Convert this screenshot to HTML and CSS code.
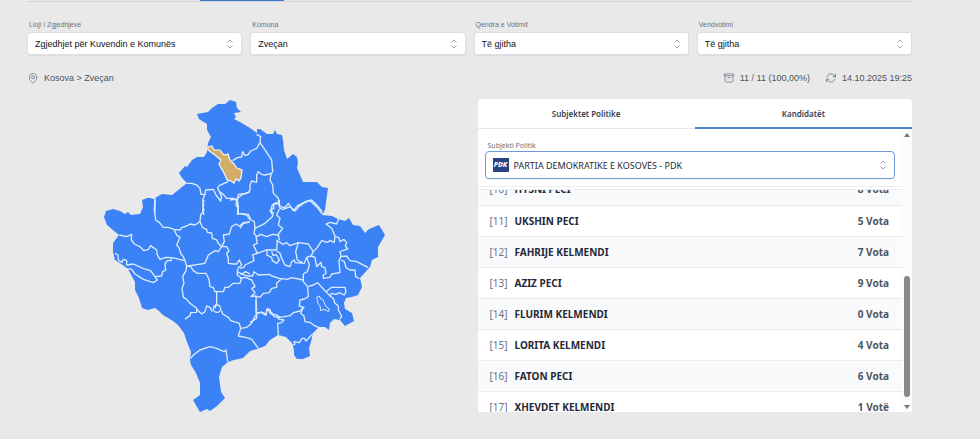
FILE: index.html
```html
<!DOCTYPE html>
<html lang="sq">
<head>
<meta charset="utf-8">
<meta name="viewport" content="width=device-width, initial-scale=1">
<title>Rezultatet - Zveçan</title>
<link rel="stylesheet" href="styles.css">
</head>
<body>
<svg class="defs" aria-hidden="true">
  <symbol id="updown" viewBox="0 0 8 10"><path d="M1.5 3.5 4 1l2.500 2.500M1.500 6.500 4 9l2.500-2.500"/></symbol>
</svg>
<main class="page">
  <div class="nav-line"><span class="nav-active"></span></div>

  <form class="filters">
    <div class="field">
      <label for="type">Lloji i Zgjedhjeve</label>
      <div class="select"><select id="type"><option>Zgjedhjet për Kuvendin e Komunës</option></select><svg class="chevrons"><use href="#updown"/></svg></div>
    </div>
    <div class="field">
      <label for="komuna">Komuna</label>
      <div class="select"><select id="komuna"><option>Zveçan</option></select><svg class="chevrons"><use href="#updown"/></svg></div>
    </div>
    <div class="field">
      <label for="qendra">Qendra e Votimit</label>
      <div class="select"><select id="qendra"><option>Të gjitha</option></select><svg class="chevrons"><use href="#updown"/></svg></div>
    </div>
    <div class="field">
      <label for="vend">Vendvotimi</label>
      <div class="select"><select id="vend"><option>Të gjitha</option></select><svg class="chevrons"><use href="#updown"/></svg></div>
    </div>
  </form>

  <div class="status">
    <div class="status-item">
      <svg class="icon" viewBox="0 0 24 24"><path d="M15 10.500a3 3 0 1 1-6 0 3 3 0 0 1 6 0Z"/><path d="M19.500 10.500c0 7.142-7.500 11.250-7.500 11.250S4.500 17.642 4.500 10.500a7.500 7.500 0 1 1 15 0Z"/></svg>
      <span>Kosova &gt; Zveçan</span>
    </div>
    <div class="status-group">
      <div class="status-item">
        <svg class="icon" viewBox="0 0 24 24"><path d="m20.250 7.500-.625 10.632a2.250 2.250 0 0 1-2.247 2.118H6.622a2.250 2.250 0 0 1-2.247-2.118L3.750 7.500M10 11.250h4M3.375 7.500h17.250c.621 0 1.125-.504 1.125-1.125v-1.500c0-.621-.504-1.125-1.125-1.125H3.375c-.621 0-1.125.504-1.125 1.125v1.500c0 .621.504 1.125 1.125 1.125Z"/></svg>
        <span>11 / 11 (100,00%)</span>
      </div>
      <div class="status-item">
        <svg class="icon" viewBox="0 0 24 24"><path d="M16.023 9.348h4.992M2.985 19.644v-4.992h4.992m-4.993 0 3.181 3.183a8.250 8.250 0 0 0 13.803-3.700M4.031 9.865a8.250 8.250 0 0 1 13.803-3.700l3.181 3.182m0-4.991v4.990"/></svg>
        <span>14.10.2025 19:25</span>
      </div>
    </div>
  </div>

  <div class="content">
    <div class="map-area">
      <svg class="map" viewBox="99 99 290 313" role="img" aria-label="Harta e Kosovës">
        <path class="land" d="M230 100L236 102L237 108L241 112L234 113L236 117L234 119L240 122L250 128L257 133L257 129L260 129L267 134L273 134L275 130L277 134L282 135L283 140L284 150L287 159L293 154L297 157L298 163L297 168L303 182L317 182L322 187L328 188L325 210L322 215L332 216L338 219L345 221L349 218L353 225L360 226L365 233L369 229L379 225L385 235L378 247L378 257L372 260L370 267L360 278L362 287L358 295L352 297L346 298L344 303L345 309L352 313L354 321L345 326L340 320L334 319L330 323L329 330L325 327L319 327L313 333L311 342L309 348L310 356L303 359L297 359L294 355L294 350L292 343L286 337L278 335L270 340L265 346L257 349L250 351L243 358L234 360L228 362L222 367L219 377L221 392L225 398L217 406L210 411L207 409L200 412L197 407L193 400L200 395L200 383L196 373L191 365L190 360L191 352L187 342L184 333L178 325L173 321L163 315L159 311L155 308L148 310L142 308L139 298L135 290L135 282L128 269L120 263L115 260L113 252L113 243L119 235L114 231L107 225L104 217L106 211L113 209L120 211L125 214L128 212L131 215L140 214L143 207L142 200L147 198L155 198L162 194L172 195L187 183L182 178L179 173L185 166L187 167L192 160L197 157L204 157L207 152L208 143L211 137L207 130L207 124L199 119L197 114L208 112L212 108L218 104L225 104Z"/>
        <g class="borders">
          <g transform="translate(100 95) scale(.3333)">
            <path d="M260 265L275 265L290 270L300 280L303 298L315 298L317 285L340 283L348 300L362 318L365 305L358 290L353 278L358 272L372 265L385 260"/>
            <path d="M358 290L370 298L380 310L400 310L412 318L415 298L435 295L450 290"/>
            <path d="M315 298L308 315L311 330L308 345L312 360M412 318L415 335L412 360M152 308L165 311L165 350"/>
          </g>
          <g transform="translate(230 95) scale(.3333)">
            <path d="M8 197L22 188L35 186L38 170L45 182L55 178L62 168L80 160L90 143"/>
            <path d="M80 118L92 125L90 143L105 165L125 195L128 230L123 238L120 255L128 270L130 295L145 310L150 335"/>
            <path d="M125 235L105 240L95 238L85 230L80 240L80 262L65 258L60 270L60 285L55 293L35 300L20 312L0 315M20 312L18 330L25 340L25 360"/>
            <path d="M150 335L140 322L130 328L132 340L120 347L128 360M150 335L165 338L175 325L190 347L205 330L212 332L225 320L245 315L260 330L277 350"/>
          </g>
          <g transform="translate(100 200) scale(.3333)">
            <path d="M165 0L163 30L167 60L178 67L190 82L205 82L222 88L240 90L245 83L260 78L270 72L285 75L300 65L302 45L312 32L308 15L312 0"/>
            <path d="M300 65L308 83L320 88L322 97L335 99L337 115L350 120L355 130L365 140M222 88L230 105L240 112L230 135L237 143L243 162L250 170L255 182L260 198"/>
            <path d="M365 140L373 125L370 105L388 102L395 80L408 72L418 78L430 68L450 65M412 0L415 40L440 45L450 60"/>
            <path d="M58 105L80 110L95 103L94 120L103 132L120 140L132 152L145 148L152 137L170 150L172 165L180 178L198 172L215 173L255 182"/>
            <path d="M365 140L355 155L345 152L325 165L315 190L295 193L265 198M365 140L380 140L387 153L380 160L385 175L385 190L400 192L410 192L418 180L425 195L415 203L412 215L425 222L437 215L450 222"/>
            <path d="M215 173L213 182L202 182L195 192L197 210L188 215L185 228L165 230"/>
            <path d="M45 160L54 165L55 180L66 187L70 178L80 182L80 195L100 192L130 206L152 212L172 240L160 248L130 238L105 222L95 208L82 206"/>
            <path d="M260 198L258 212L248 230L252 250L246 265L250 292L260 298L270 310L290 325L290 337L272 338L270 347L255 358"/>
            <path d="M260 198L272 200L280 212L292 220L318 220L327 238L330 260L340 263L345 275L370 275L375 262L385 262L400 250L420 250L425 235L412 225L412 215M350 275L350 310L345 325"/>
          </g>
          <g transform="translate(240 200) scale(.3333)">
            <path d="M0 40L25 43L33 60L43 65L45 85L75 70L97 50L100 38L92 32L97 15L118 8L118 0M115 0L120 25L130 28L150 20L165 33L175 22L182 12L210 2L230 20L247 42"/>
            <path d="M118 28L110 45L120 55L115 75L128 85L115 102L118 120M0 85L10 70L28 67M45 85L42 100L50 110L62 103L80 110L98 103L115 105M48 110L52 130L40 135L52 160L80 150L110 150L112 120"/>
            <path d="M52 160L38 165L42 182L15 195L12 202L0 205M82 152L80 165L95 172L97 182L110 190L118 180L110 165L98 165L95 155M110 120L128 133L140 128L150 137L175 128L205 132L220 155L213 168L200 172L193 190L165 188L163 180L155 185L150 200L135 195L125 175L120 160L110 153M175 128L167 155L172 180L188 188"/>
            <path d="M220 155L232 142L245 122L262 127L270 122L283 127L285 108L275 85L258 72L270 67L290 72L296 57"/>
            <path d="M285 110L296 112L300 125L312 118L320 128L316 138L323 147L300 155L303 167L297 182L300 218L275 222L270 232L250 235L250 225L258 220L255 203L245 200L243 187L230 200L225 172L213 168"/>
            <path d="M303 170L320 168L330 182L350 185L385 203M303 180L313 185L318 203L330 210L345 210L347 230L358 236M200 172L208 195L202 215L190 222L190 245L203 260"/>
            <path d="M0 220L20 228L38 228L42 215L55 225L88 223L95 228L118 235L142 238L155 233L190 240M123 238L110 250L110 262L95 265L88 278L70 280L60 292L45 288L33 290L45 278L35 265L45 260L35 240L15 232L0 235M48 290L50 335"/>
          </g>
          <g transform="translate(250 270) scale(.3333)">
            <path d="M173 50L190 45L203 38L215 52L228 65L245 52L285 52L288 65L283 75L268 68L258 73L245 70L240 78L228 65M240 78L250 85L255 100L265 108L265 120L275 138L270 148"/>
            <path d="M173 50L175 80L163 87L150 90L148 108L162 112L150 123L130 128L120 137L90 142L72 140L65 128L60 130L53 115L48 132L35 126L20 130L20 145L0 158"/>
            <path d="M160 112L152 130L162 138L165 155L182 158L195 168L207 172M80 140L88 148L102 150L95 158L83 160L85 195M125 228L135 222L132 215L148 218L156 205L163 205L168 213L182 198L188 192"/>
            <path class="fine" d="M200 82L208 78L212 87L218 88L228 110L238 117L236 125L222 118L212 122L210 108L205 103Z"/>
          </g>
          <g transform="translate(150 300) scale(.3333)">
            <path d="M140 28L155 42L165 35L170 18L180 22L187 35M215 32L218 42L235 52L242 62L268 70L272 85L265 108L290 113L305 118L325 145M272 85L290 82L303 72L312 55L322 38L335 38L348 46L350 28L360 28L364 42L380 45L390 52M318 0L318 40M122 175L130 165L150 150L180 140L200 145L222 155L228 150L233 185"/>
            <circle cx="201" cy="26" r="11"/>
          </g>
        </g>
        <path class="selected" d="M208 147L212 146L214 150L220 150L224 155L228 154L230 160L233 163L237 168L242 170L241 178L239 181L236 179L234 183L231 181L227 180L225 175L219 164L221 160L215 155L208 150Z"/>
      </svg>
    </div>

    <section class="panel">
      <div class="tabs" role="tablist">
        <button class="tab" type="button" role="tab" aria-selected="false">Subjektet Politike</button>
        <button class="tab tab-active" type="button" role="tab" aria-selected="true">Kandidatët</button>
      </div>
      <div class="panel-body">
        <div class="panel-main">
          <div class="party">
            <label for="party">Subjekti Politik</label>
            <div class="select party-select">
              <span class="logo">PDK</span>
              <select id="party"><option>PARTIA DEMOKRATIKE E KOSOVËS - PDK</option></select>
              <svg class="chevrons"><use href="#updown"/></svg>
            </div>
          </div>
          <div class="list">
            <table>
              <tbody>
                <tr><td class="num">[10]</td><th scope="row">HYSNI PECI</th><td class="votes">8 Vota</td></tr>
                <tr><td class="num">[11]</td><th scope="row">UKSHIN PECI</th><td class="votes">5 Vota</td></tr>
                <tr><td class="num">[12]</td><th scope="row">FAHRIJE KELMENDI</th><td class="votes">7 Vota</td></tr>
                <tr><td class="num">[13]</td><th scope="row">AZIZ PECI</th><td class="votes">9 Vota</td></tr>
                <tr><td class="num">[14]</td><th scope="row">FLURIM KELMENDI</th><td class="votes">0 Vota</td></tr>
                <tr><td class="num">[15]</td><th scope="row">LORITA KELMENDI</th><td class="votes">4 Vota</td></tr>
                <tr><td class="num">[16]</td><th scope="row">FATON PECI</th><td class="votes">6 Vota</td></tr>
                <tr><td class="num">[17]</td><th scope="row">XHEVDET KELMENDI</th><td class="votes">1 Votë</td></tr>
              </tbody>
            </table>
          </div>
        </div>
        <div class="scrollbar" aria-hidden="true">
          <svg class="arrow" viewBox="0 0 6 4"><path d="M0 4 3 0l3 4Z"/></svg>
          <div class="track"><div class="thumb"></div></div>
          <svg class="arrow" viewBox="0 0 6 4"><path d="M0 0 3 4l3-4Z"/></svg>
        </div>
      </div>
    </section>
  </div>
</main>
</body>
</html>
```
FILE: styles.css
```css
* { box-sizing: border-box; }
body {
  margin: 0;
  background: #e9e9e9;
  color: #1f2937;
  font-family: "Liberation Sans", Arial, sans-serif;
  font-size: 9px;
}
.defs { display: block; width: 0; height: 0; }
.page { padding: 0 68px 24px 27px; }

.nav-line { height: 2px; border-bottom: 1px solid #d3d5d8; }
.nav-active {
  display: block;
  width: 84px;
  height: 1px;
  margin-left: 173px;
  background: #3f7ad0;
}

.filters {
  display: grid;
  grid-template-columns: repeat(4, 1fr);
  gap: 8px;
  padding-top: 18px;
}
.field label, .party label {
  display: block;
  padding-left: 2px;
  color: #6b7280;
  font-size: 7px;
  line-height: 10px;
}
.field label { margin-bottom: 2px; }
.select { position: relative; }
select {
  display: block;
  width: 100%;
  height: 23px;
  padding: 0 24px 0 7px;
  appearance: none;
  border: 1px solid #dcdee1;
  border-radius: 3px;
  background: #fff;
  color: #111;
  font: inherit;
  box-shadow: 0 1px 1px #0000000d;
}
.chevrons {
  position: absolute;
  top: 50%;
  right: 8px;
  width: 8px;
  height: 10px;
  margin-top: -5px;
  fill: none;
  stroke: #a0a4aa;
  pointer-events: none;
}

.status {
  display: flex;
  justify-content: space-between;
  padding: 17px 0 15px;
  color: #4b5563;
  line-height: 12px;
}
.status-group { display: flex; gap: 15px; }
.status-item { display: flex; align-items: center; gap: 5px; }
.icon {
  width: 12px;
  height: 12px;
  fill: none;
  stroke: #6b7280;
  stroke-width: 1.5;
  stroke-linecap: round;
  stroke-linejoin: round;
}

.content {
  display: grid;
  grid-template-columns: 1fr 1fr;
  gap: 16px;
}
.map-area { display: flex; justify-content: center; align-items: center; }
.map { width: 290px; }
.land { fill: #3b82f6; }
.borders { fill: none; stroke: #dcecff; stroke-width: 4; stroke-linejoin: round; }
.borders .fine { stroke-width: 3; }
.selected { fill: #d3ad68; stroke: #f3f6fa; stroke-width: 1.2; }

.panel {
  overflow: hidden;
  border-radius: 4px 4px 0 0;
  background: #fff;
  font-family: "Noto Sans", sans-serif;
}
.tabs { display: flex; }
.tab {
  flex: 1;
  height: 30px;
  padding: 0;
  border: 0;
  border-bottom: 1px solid #e5e7eb;
  background: none;
  color: #374151;
  font: inherit;
  font-size: 8px;
  font-weight: 600;
}
.tab-active { border-bottom: 2px solid #4a80cc; }
.panel-body { display: flex; }
.panel-main { flex: 1; min-width: 0; }
.party { padding: 12px 7px 7px; border-bottom: 1px solid #eceef0; }
.party label { padding-left: 3px; }
.party select {
  height: 28px;
  padding-left: 28px;
  border-color: #6f9ad8;
  border-radius: 4px;
  color: #1f2937;
}
.logo {
  position: absolute;
  top: 7px;
  left: 8px;
  width: 16px;
  background: #26437f;
  color: #fff;
  font-size: 7px;
  font-style: italic;
  font-weight: 800;
  line-height: 14px;
  text-align: center;
}
.list {
  height: 223px;
  margin-top: 2px;
  overflow: hidden;
  border-top: 1px solid #eceef0;
}
table { width: 100%; margin-top: -16px; border-collapse: collapse; }
td, th { height: 31px; padding: 0; border-bottom: 1px solid #e8eaed; font-size: 10px; }
tr:nth-child(odd) { background: #f9fafb; }
.num { width: 37px; padding-left: 12px; color: #6b7280; }
th { text-align: left; font-weight: 700; }
.votes { padding-right: 13px; color: #4b5563; font-weight: 700; text-align: right; }

.scrollbar {
  display: flex;
  flex-direction: column;
  align-items: center;
  width: 10px;
  padding: 4px 0 3px;
  background: #fcfcfc;
}
.arrow { width: 6px; height: 4px; fill: #777; }
.track { display: flex; flex: 1; flex-direction: column; justify-content: flex-end; padding: 8px 0; }
.thumb { width: 6px; height: 48%; border-radius: 3px; background: #888; }
```
